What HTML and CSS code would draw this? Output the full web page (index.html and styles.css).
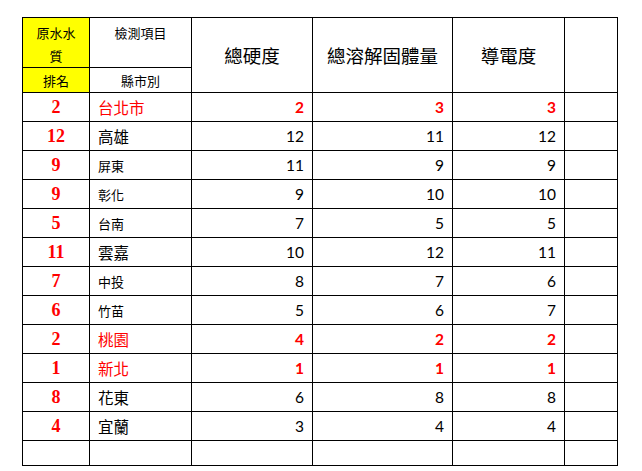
FILE: index.html
```html
<!DOCTYPE html>
<html lang="zh-Hant">
<head>
<meta charset="utf-8">
<title>原水水質排名</title>
<link rel="stylesheet" href="styles.css">
</head>
<body>
<table class="grid">
  <colgroup>
    <col class="c-rank"><col class="c-city"><col class="c-a"><col class="c-b"><col class="c-c"><col class="c-d">
  </colgroup>
  <thead>
    <tr class="h1">
      <th class="yellow rank-head">原水水<br>質</th>
      <th class="item-head">檢測項目</th>
      <th class="big-head" rowspan="2">總硬度</th>
      <th class="big-head" rowspan="2">總溶解固體量</th>
      <th class="big-head" rowspan="2">導電度</th>
      <th rowspan="2"></th>
    </tr>
    <tr class="h2">
      <th class="yellow small-head">排名</th>
      <th class="small-head">縣市別</th>
    </tr>
  </thead>
  <tbody>
    <tr class="hot"><td class="rank">2</td><td class="city lg">台北市</td><td class="num b">2</td><td class="num b">3</td><td class="num b">3</td><td></td></tr>
    <tr><td class="rank">12</td><td class="city lg">高雄</td><td class="num">12</td><td class="num">11</td><td class="num">12</td><td></td></tr>
    <tr><td class="rank">9</td><td class="city sm">屏東</td><td class="num">11</td><td class="num">9</td><td class="num">9</td><td></td></tr>
    <tr><td class="rank">9</td><td class="city sm">彰化</td><td class="num">9</td><td class="num">10</td><td class="num">10</td><td></td></tr>
    <tr><td class="rank">5</td><td class="city sm">台南</td><td class="num">7</td><td class="num">5</td><td class="num">5</td><td></td></tr>
    <tr><td class="rank">11</td><td class="city lg">雲嘉</td><td class="num">10</td><td class="num">12</td><td class="num">11</td><td></td></tr>
    <tr><td class="rank">7</td><td class="city sm">中投</td><td class="num">8</td><td class="num">7</td><td class="num">6</td><td></td></tr>
    <tr><td class="rank">6</td><td class="city sm">竹苗</td><td class="num">5</td><td class="num">6</td><td class="num">7</td><td></td></tr>
    <tr class="hot"><td class="rank">2</td><td class="city lg">桃園</td><td class="num b">4</td><td class="num b">2</td><td class="num b">2</td><td></td></tr>
    <tr class="hot"><td class="rank">1</td><td class="city lg">新北</td><td class="num b">1</td><td class="num b">1</td><td class="num b">1</td><td></td></tr>
    <tr><td class="rank">8</td><td class="city lg">花東</td><td class="num">6</td><td class="num">8</td><td class="num">8</td><td></td></tr>
    <tr><td class="rank">4</td><td class="city lg">宜蘭</td><td class="num">3</td><td class="num">4</td><td class="num">4</td><td></td></tr>
    <tr class="empty"><td></td><td></td><td></td><td></td><td></td><td></td></tr>
  </tbody>
</table>
<p class="note">註：原水水質排名係依總硬度、總溶解固體量及導電度綜合比較。</p>
</body>
</html>
```
FILE: styles.css
```css
html, body {
  margin: 0;
  background: #fff;
}
body {
  padding: 17px 0 0 22px;
  font-family: "Noto Sans CJK TC", sans-serif;
  color: #000;
  overflow: hidden;
  height: 471px;
  box-sizing: border-box;
}
.grid {
  border-collapse: collapse;
  table-layout: fixed;
  width: 596px;
}
.c-rank { width: 67px; }
.c-city { width: 102px; }
.c-a { width: 121px; }
.c-b { width: 140px; }
.c-c { width: 112px; }
.c-d { width: 53px; }
.grid th, .grid td {
  border: 1px solid #000;
  padding: 0;
  font-weight: normal;
  box-sizing: border-box;
}
.grid .yellow { background: #ffff00; }
.grid .h1 th { height: 49px; }
.grid .h2 th { height: 25px; }
.grid .rank-head,
.grid .item-head {
  font-size: 13px;
  line-height: 23px;
  vertical-align: top;
  padding-top: 3px;
}
.grid .small-head {
  font-size: 13px;
  line-height: 20px;
  vertical-align: middle;
  padding-top: 2px;
}
.grid .big-head {
  font-size: 18.5px;
  vertical-align: middle;
  text-align: center;
}
.grid tbody td { height: 29px; vertical-align: middle; }
.grid tbody tr.empty td { height: 25px; }
.grid .rank {
  text-align: center;
  font-family: "Liberation Serif", serif;
  font-weight: bold;
  font-size: 18px;
  color: #ff0000;
}
.grid .city {
  text-align: left;
  padding-left: 8px;
}
.grid .city.lg { font-size: 15.5px; }
.grid .city.sm { font-size: 13px; }
.grid .hot .city { color: #ff0000; }
.grid .num {
  text-align: right;
  padding-right: 8px;
  font-family: Lato, "Open Sans", sans-serif;
  font-size: 15.5px;
}
.grid .num.b {
  color: #ff0000;
  font-weight: bold;
}
.note {
  margin: 3px 0 0 -17px;
  font-size: 13px;
  color: #c8c8d0;
  white-space: nowrap;
}
```
